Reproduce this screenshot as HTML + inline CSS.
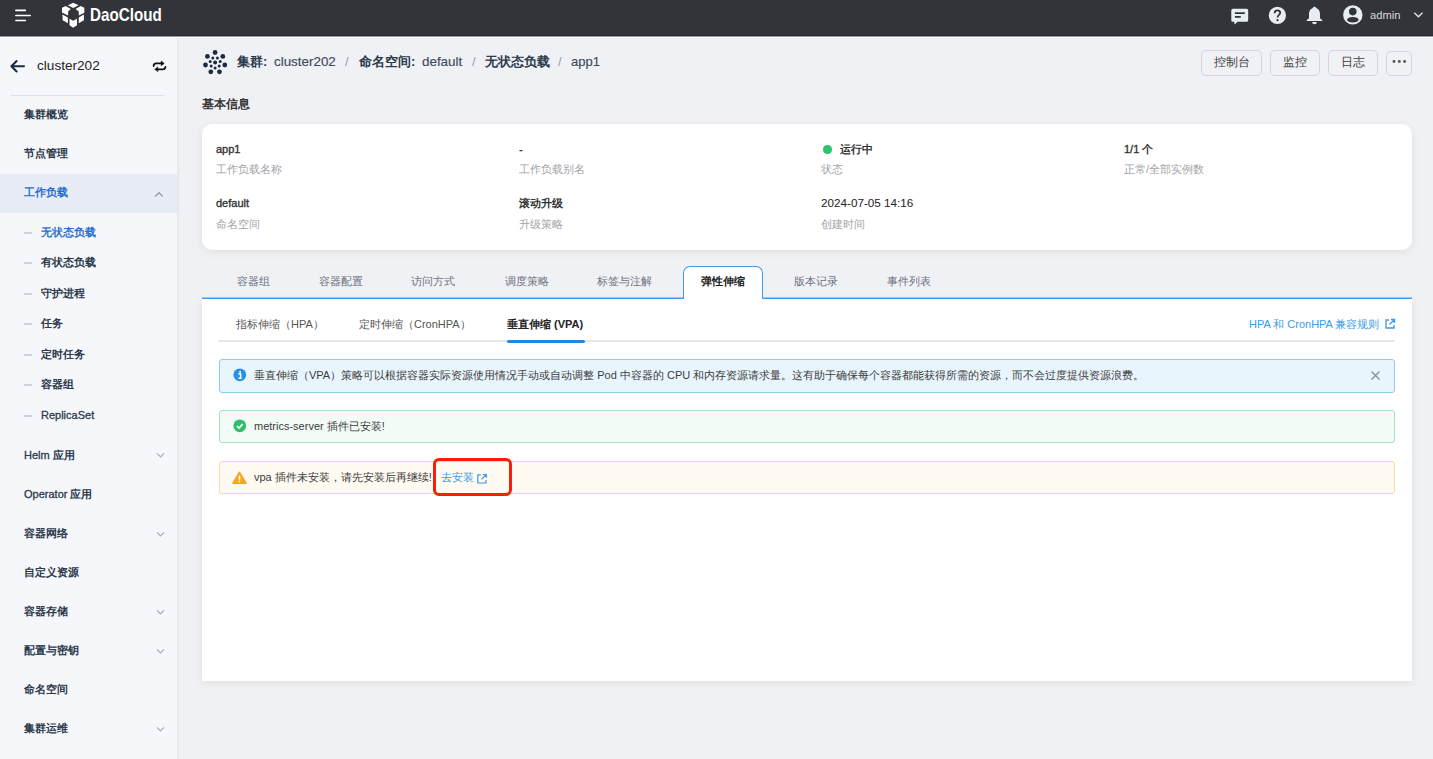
<!DOCTYPE html>
<html><head><meta charset="utf-8">
<style>
*{box-sizing:border-box;margin:0;padding:0}
html,body{width:1433px;height:759px;overflow:hidden;background:#f0f1f5;font-family:"Liberation Sans",sans-serif;color:#333}
.a{position:absolute;white-space:nowrap}
#hdr{position:absolute;left:0;top:0;width:1433px;height:36px;background:#333439;border-bottom:1px solid #2b2c31;z-index:2}
#wl{position:absolute;left:0;top:36px;width:1433px;height:2px;background:linear-gradient(#9a9b9f 50%,#fff 50%);z-index:2}
#side{position:absolute;left:0;top:37px;width:177px;height:722px;background:#f6f7fb;box-shadow:1px 0 3px rgba(0,0,0,0.07)}
.mi{position:absolute;left:24px;font-size:11px;font-weight:bold;color:#2c3a4b;line-height:14px}
.si{position:absolute;left:41px;font-size:11px;font-weight:bold;color:#2c3a4b;line-height:14px}
.dash{position:absolute;left:24px;width:8px;height:2px;background:#cdd2da}
.chev{position:absolute;left:152px}
.card{position:absolute;background:#fff;border-radius:8px;box-shadow:0 2px 8px rgba(0,0,0,0.075)}
.val{position:absolute;font-size:11px;font-weight:bold;color:#333;line-height:14px}
.vl{font-weight:normal;-webkit-text-stroke:0.35px #333}
.bl{-webkit-text-stroke:0.15px #3d4b5c}
.lab{position:absolute;font-size:11px;color:#a0a4aa;line-height:14px}
.tab{position:absolute;top:273.8px;font-size:11px;color:#6b7280;line-height:14px}
.btn{position:absolute;top:50px;height:26px;border:1px solid #d0d5de;border-radius:5px;font-size:11.5px;color:#3f3f3f;line-height:22.5px;text-align:center}
.alert{position:absolute;left:219px;width:1176px;height:33px;border:1px solid;border-radius:3px}
.at{position:absolute;left:254px;font-size:11px;color:#3b3b3b;line-height:14px}
</style></head><body>
<div id="hdr">
  <svg class="a" style="left:14px;top:8px" width="20" height="16" viewBox="0 0 20 16"><path d="M1.9 2.4H11.4M1.9 7.5H16.2M1.9 12.5H11.4" stroke="#fff" stroke-width="1.6" stroke-linecap="round"/></svg>
  <svg class="a" style="left:58px;top:0px" width="30" height="30" viewBox="0 0 30 30"><g fill="#fff">
<path d="M15.2 2.8L20.6 5.3L15.2 8.1L9.9 5.3Z"/>
<path d="M4 7.7L7.7 5.9L12.8 9.1L10.1 11.5L10.1 15.6L4 12.6Z"/>
<path d="M26.3 7.7L22.6 5.9L17.6 9.1L20.75 11.5L20.75 15.6L26.3 12.8Z"/>
<path d="M4.5 14.6L9.9 17.4L9.9 23.3L4.7 20.2Z"/>
<path d="M20.75 17.4L25.9 14.6L25.9 20.2L20.75 23.3Z"/>
<path d="M11.5 18.8L15.2 20.8L19 18.8L19 25.3L15.2 27.7L11.5 25.3Z"/>
</g></svg>
  <div class="a" style="left:89.5px;top:2.5px;font-size:19px;font-weight:bold;color:#fff;line-height:24px;transform:scaleX(0.8);transform-origin:0 0">DaoCloud</div>
  <!-- right icons -->
  <svg class="a" style="left:1230px;top:8px" width="20" height="18" viewBox="0 0 20 18"><path d="M2.9 0.7H16.6A1.6 1.6 0 0 1 18.2 2.3V12.2A1.6 1.6 0 0 1 16.6 13.8H7.6L4.6 16.4L4.2 13.8H2.9A1.6 1.6 0 0 1 1.3 12.2V2.3A1.6 1.6 0 0 1 2.9 0.7Z" fill="#e8ecf5"/><path d="M4.9 5.1H14.8M4.9 8.9H10.8" stroke="#333439" stroke-width="1.6"/></svg>
  <svg class="a" style="left:1268px;top:6px" width="19" height="19" viewBox="0 0 19 19"><circle cx="9.4" cy="9.4" r="8.6" fill="#e8ecf5"/><path d="M6.6 7.2C6.6 5.4 7.9 4.4 9.4 4.4C11 4.4 12.2 5.4 12.2 6.9C12.2 8.8 9.6 9 9.6 11.2V11.6" fill="none" stroke="#323338" stroke-width="1.7"/><circle cx="9.5" cy="14.2" r="1.1" fill="#323338"/></svg>
  <svg class="a" style="left:1305px;top:6px" width="19" height="20" viewBox="0 0 19 20"><path d="M9.5 0.8C10.5 0.8 11 1.4 11.2 2C13.8 2.8 15 5.2 15 8V12.2L17.3 14.3V15H1.7V14.3L4 12.2V8C4 5.2 5.2 2.8 7.8 2C8 1.4 8.5 0.8 9.5 0.8Z" fill="#e8ecf5"/><path d="M7.2 16H11.8A2.3 2.3 0 0 1 7.2 16Z" fill="#e8ecf5"/></svg>
  <svg class="a" style="left:1342px;top:4px" width="22" height="22" viewBox="0 0 22 22"><circle cx="10.8" cy="10.9" r="9.7" fill="#e8ecf5"/><circle cx="10.8" cy="7.6" r="3.8" fill="#323338"/><ellipse cx="10.8" cy="15.8" rx="5.8" ry="2.8" fill="#323338"/></svg>
  <div class="a" style="left:1370px;top:8px;font-size:11.2px;color:#d6d8dd;line-height:14px">admin</div>
  <svg class="a" style="left:1413px;top:11px" width="11" height="8" viewBox="0 0 11 8"><path d="M1.3 1.8L5.4 5.8L9.5 1.8" fill="none" stroke="#e0e2e6" stroke-width="1.4"/></svg>
</div>
<div id="wl"></div>
<div id="side">
  <svg class="a" style="left:9px;top:21px" width="18" height="17" viewBox="0 0 18 17"><path d="M2.4 8.3H15M7.6 3.1L2.4 8.3L7.6 13.5" fill="none" stroke="#1b2b44" stroke-width="2.1" stroke-linecap="round" stroke-linejoin="round"/></svg>
  <div class="a" style="left:37px;top:21px;font-size:13.6px;color:#222;line-height:16px">cluster202</div>
  <svg class="a" style="left:151px;top:22px" width="17" height="14" viewBox="0 0 17 14"><path d="M2.6 7C2.6 5.4 3.4 4.4 5.2 4.4H11" fill="none" stroke="#111" stroke-width="1.8" stroke-linecap="round"/><path d="M10.2 2L13.2 4.4L10.2 6.8Z" fill="#111" stroke="#111" stroke-width="0.6" stroke-linejoin="round"/><path d="M14.4 7.8C14.4 9.4 13.6 10.3 11.8 10.3H6" fill="none" stroke="#111" stroke-width="1.8" stroke-linecap="round"/><path d="M6.8 8L3.8 10.3L6.8 12.6Z" fill="#111" stroke="#111" stroke-width="0.6" stroke-linejoin="round"/></svg>
  <div class="a" style="left:11px;top:58px;width:153px;height:1px;background:#dde1e8"></div>
  <div class="mi" style="top:70px">集群概览</div>
  <div class="mi" style="top:109px">节点管理</div>
  <div class="a" style="left:0;top:137px;width:177px;height:39px;background:#e8ecf5"></div>
  <div class="mi" style="top:148px;color:#2a6fd2">工作负载</div>
  <svg class="chev" style="top:152.5px" width="14" height="8" viewBox="0 0 14 8"><path d="M3.2 6.5L7 2.7L10.6 6.5" fill="none" stroke="#8c95a2" stroke-width="1.2"/></svg>
  <div class="dash" style="top:195px"></div><div class="si" style="top:188px;color:#2a6fd2">无状态负载</div>
  <div class="dash" style="top:225px"></div><div class="si" style="top:218px">有状态负载</div>
  <div class="dash" style="top:256px"></div><div class="si" style="top:249px">守护进程</div>
  <div class="dash" style="top:286px"></div><div class="si" style="top:279px">任务</div>
  <div class="dash" style="top:317px"></div><div class="si" style="top:310px">定时任务</div>
  <div class="dash" style="top:347px"></div><div class="si" style="top:340px">容器组</div>
  <div class="dash" style="top:378px"></div><div class="si" style="top:371px"><span style="font-weight:normal;-webkit-text-stroke:0.3px #2c3a4b">ReplicaSet</span></div>
  <div class="mi" style="top:410.5px"><span style="font-weight:normal;-webkit-text-stroke:0.3px #2c3a4b">Helm</span> 应用</div>
  <svg class="chev" style="top:414px" width="14" height="8" viewBox="0 0 14 8"><path d="M5 2.3L8.5 5.9L12 2.3" fill="none" stroke="#a4acb7" stroke-width="1.2"/></svg>
  <div class="mi" style="top:449.5px"><span style="font-weight:normal;-webkit-text-stroke:0.3px #2c3a4b">Operator</span> 应用</div>
  <div class="mi" style="top:488.8px">容器网络</div>
  <svg class="chev" style="top:493px" width="14" height="8" viewBox="0 0 14 8"><path d="M5 2.3L8.5 5.9L12 2.3" fill="none" stroke="#a4acb7" stroke-width="1.2"/></svg>
  <div class="mi" style="top:527.8px">自定义资源</div>
  <div class="mi" style="top:566.8px">容器存储</div>
  <svg class="chev" style="top:571px" width="14" height="8" viewBox="0 0 14 8"><path d="M5 2.3L8.5 5.9L12 2.3" fill="none" stroke="#a4acb7" stroke-width="1.2"/></svg>
  <div class="mi" style="top:605.8px">配置与密钥</div>
  <svg class="chev" style="top:610px" width="14" height="8" viewBox="0 0 14 8"><path d="M5 2.3L8.5 5.9L12 2.3" fill="none" stroke="#a4acb7" stroke-width="1.2"/></svg>
  <div class="mi" style="top:644.8px">命名空间</div>
  <div class="mi" style="top:684px">集群运维</div>
  <svg class="chev" style="top:688px" width="14" height="8" viewBox="0 0 14 8"><path d="M5 2.3L8.5 5.9L12 2.3" fill="none" stroke="#a4acb7" stroke-width="1.2"/></svg>
</div>
<!-- MAIN -->
<svg class="a" style="left:200px;top:48px" width="30" height="30" viewBox="0 0 30 30"><g fill="#1b2b44"><circle cx="15.1" cy="4.5" r="2.4"/><circle cx="7.4" cy="8.4" r="2.4"/><circle cx="22.8" cy="8.4" r="2.4"/><circle cx="5.5" cy="17" r="2.4"/><circle cx="24.8" cy="17" r="2.4"/><circle cx="10.8" cy="23.8" r="2.4"/><circle cx="19.5" cy="23.8" r="2.4"/><circle cx="15.1" cy="14.6" r="2"/><circle cx="12.8" cy="10.1" r="1.5"/><circle cx="17.4" cy="10.1" r="1.5"/><circle cx="10.2" cy="13.4" r="1.5"/><circle cx="20.2" cy="13.4" r="1.5"/><circle cx="11.2" cy="18" r="1.5"/><circle cx="19.2" cy="18" r="1.5"/><circle cx="15.1" cy="20" r="1.5"/></g></svg>
<div class="a" style="left:237px;top:54px;font-size:13px;line-height:16px;font-weight:bold;color:#2c3a4b">集群:</div>
<div class="a bl" style="left:274px;top:54px;font-size:13.4px;line-height:16px;color:#3d4b5c">cluster202</div>
<div class="a" style="left:345px;top:54px;font-size:13px;line-height:16px;color:#9a9ea5">/</div>
<div class="a" style="left:359px;top:54px;font-size:13px;line-height:16px;font-weight:bold;color:#2c3a4b">命名空间:</div>
<div class="a bl" style="left:422px;top:54px;font-size:13.4px;line-height:16px;color:#3d4b5c">default</div>
<div class="a" style="left:472px;top:54px;font-size:13px;line-height:16px;color:#9a9ea5">/</div>
<div class="a" style="left:485px;top:54px;font-size:13px;line-height:16px;font-weight:bold;color:#2c3a4b">无状态负载</div>
<div class="a" style="left:558px;top:54px;font-size:13px;line-height:16px;color:#9a9ea5">/</div>
<div class="a bl" style="left:571px;top:54px;font-size:13px;line-height:16px;color:#3d4b5c">app1</div>
<div class="btn" style="left:1201px;width:61px">控制台</div>
<div class="btn" style="left:1270px;width:50px">监控</div>
<div class="btn" style="left:1328px;width:50px">日志</div>
<div class="btn" style="left:1386px;width:26px;top:50.5px;height:25px"></div><svg class="a" style="left:1392px;top:59px" width="15" height="5" viewBox="0 0 15 5"><circle cx="2" cy="2.5" r="1.45" fill="#555"/><circle cx="7.3" cy="2.5" r="1.45" fill="#555"/><circle cx="12.6" cy="2.5" r="1.45" fill="#555"/></svg>
<div class="a" style="left:202px;top:97px;font-size:12px;font-weight:bold;color:#333;line-height:15px">基本信息</div>
<div class="card" style="left:202px;top:124px;width:1210px;height:126px;border-radius:10px"></div>
<div class="val vl" style="left:216px;top:142px">app1</div><div class="lab" style="left:216px;top:162px">工作负载名称</div>
<div class="val" style="left:519px;top:142px">-</div><div class="lab" style="left:519px;top:162px">工作负载别名</div>
<div class="a" style="left:823px;top:145px;width:8.5px;height:8.5px;border-radius:50%;background:#2cc56a"></div>
<div class="val" style="left:840px;top:142px">运行中</div><div class="lab" style="left:821px;top:162px">状态</div>
<div class="val" style="left:1124px;top:142px"><span class="vl">1/1</span> 个</div><div class="lab" style="left:1124px;top:162px">正常/全部实例数</div>
<div class="val vl" style="left:216px;top:196px">default</div><div class="lab" style="left:216px;top:217px">命名空间</div>
<div class="val" style="left:519px;top:196px">滚动升级</div><div class="lab" style="left:519px;top:217px">升级策略</div>
<div class="val" style="left:821px;top:196px;font-weight:normal;color:#222;font-size:11.7px">2024-07-05 14:16</div><div class="lab" style="left:821px;top:217px">创建时间</div>
<!-- tabs -->
<div class="card" style="left:202px;top:298px;width:1210px;height:383px;border-radius:0"></div>
<div class="a" style="left:202px;top:297px;width:1210px;height:2px;background:linear-gradient(rgba(61,155,233,0.45) 50%,#3d9be9 50%)"></div>
<div class="a" style="left:683px;top:266px;width:80px;height:33px;background:#fff;border:1.5px solid #3d9be9;border-bottom:none;border-radius:7px 7px 0 0;box-shadow:0 1px 0 #fff"></div>
<div class="tab" style="left:237px">容器组</div>
<div class="tab" style="left:319px">容器配置</div>
<div class="tab" style="left:411px">访问方式</div>
<div class="tab" style="left:505px">调度策略</div>
<div class="tab" style="left:597px">标签与注解</div>
<div class="tab" style="left:701px;font-weight:bold;color:#222">弹性伸缩</div>
<div class="tab" style="left:794px">版本记录</div>
<div class="tab" style="left:887px">事件列表</div>
<!-- subtabs -->
<div class="a" style="left:219px;top:340px;width:1176px;height:2px;background:#e3e5e8"></div>
<div class="a" style="left:507px;top:339.5px;width:78px;height:3px;border-radius:2px;background:#1e88e5"></div>
<div class="a" style="left:236px;top:316.5px;font-size:11px;color:#555;line-height:14px">指标伸缩（HPA）</div>
<div class="a" style="left:359px;top:316.5px;font-size:11px;color:#555;line-height:14px">定时伸缩（CronHPA）</div>
<div class="a" style="left:507px;top:316.5px;font-size:11px;font-weight:bold;color:#222;line-height:14px">垂直伸缩 (VPA)</div>
<div class="a" style="left:1249px;top:316.5px;font-size:11px;color:#3a9be6;line-height:14px">HPA 和 CronHPA 兼容规则</div>
<svg class="a" style="left:1384px;top:318px" width="12" height="12" viewBox="0 0 12 12"><path d="M5 2H2V10H10V7M7 1.5H10.5V5M10.5 1.5L5.5 6.5" fill="none" stroke="#3a9be6" stroke-width="1.3"/></svg>
<!-- alerts -->
<div class="alert" style="top:359px;height:34px;background:#e9f5fd;border-color:#8fcaf3"></div>
<svg class="a" style="left:233px;top:368px" width="14" height="14" viewBox="0 0 14 14"><circle cx="6.8" cy="6.8" r="6.4" fill="#2391ea"/><path d="M5.3 5.8H7.6V10.2M5.4 10.3H8.7" fill="none" stroke="#fff" stroke-width="1.5"/><circle cx="7.1" cy="3.7" r="1" fill="#fff"/></svg>
<div class="at" style="top:368px">垂直伸缩（VPA）策略可以根据容器实际资源使用情况手动或自动调整 Pod 中容器的 CPU 和内存资源请求量。这有助于确保每个容器都能获得所需的资源，而不会过度提供资源浪费。</div>
<svg class="a" style="left:1370px;top:370px" width="11" height="11" viewBox="0 0 11 11"><path d="M1.5 1.5L9.5 9.5M9.5 1.5L1.5 9.5" stroke="#8a8f96" stroke-width="1.4"/></svg>
<div class="alert" style="top:410px;background:#f3fbf6;border-color:#a6e2bb"></div>
<svg class="a" style="left:233px;top:419px" width="14" height="14" viewBox="0 0 14 14"><circle cx="6.8" cy="6.8" r="6.4" fill="#2fbf6a"/><path d="M3.9 7L6 9L9.8 5" fill="none" stroke="#fff" stroke-width="1.7"/></svg>
<div class="at" style="top:419px">metrics-server 插件已安装!</div>
<div class="alert" style="top:461px;background:#fffaf1;border-color:#fbd9a4"></div>
<svg class="a" style="left:232px;top:470px" width="16" height="15" viewBox="0 0 16 15"><path d="M7.3 2.6Q7.5 2.2 7.7 2.6L14 13.2H1Z" fill="#f5a623" stroke="#f5a623" stroke-width="1.6" stroke-linejoin="round"/><rect x="6.75" y="5.6" width="1.5" height="4.2" rx="0.6" fill="#fff"/><circle cx="7.5" cy="11.4" r="0.85" fill="#fff"/></svg>
<div class="at" style="top:470px">vpa 插件未安装，请先安装后再继续!</div>
<div class="a" style="left:441px;top:470px;font-size:11px;color:#3a9be6;line-height:14px">去安装</div>
<svg class="a" style="left:476px;top:472.5px" width="12" height="12" viewBox="0 0 12 12"><path d="M4.8 1.8H1.8V10H10V7M7 1.5H10.3V4.8M10.3 1.5L5.5 6.3" fill="none" stroke="#3a9be6" stroke-width="1.2"/></svg>
<div class="a" style="left:433px;top:458px;width:79px;height:38px;border:3px solid #fa1e08;border-radius:6px"></div>
</body></html>
